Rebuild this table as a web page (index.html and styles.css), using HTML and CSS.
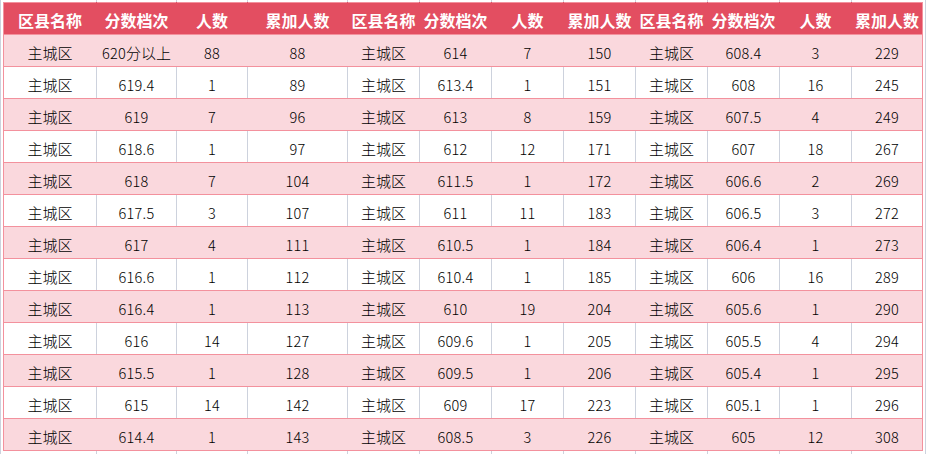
FILE: index.html
```html
<!DOCTYPE html>
<html lang="zh">
<head>
<meta charset="utf-8">
<title>分数档次</title>
<link rel="stylesheet" href="styles.css">
</head>
<body>
<div class="sheet">
<table class="grid">
<colgroup>
<col class="w93"><col class="w80"><col class="w71"><col class="w100">
<col class="w72"><col class="w72"><col class="w72"><col class="w72">
<col class="w72"><col class="w72"><col class="w72"><col class="w71">
</colgroup>
<thead>
<tr class="head">
<th>区县名称</th><th>分数档次</th><th>人数</th><th>累加人数</th>
<th>区县名称</th><th>分数档次</th><th>人数</th><th>累加人数</th>
<th>区县名称</th><th>分数档次</th><th>人数</th><th>累加人数</th>
</tr>
</thead>
<tbody>
<tr class="pink"><td class="c">主城区</td><td>620<span class="c">分以上</span></td><td>88</td><td>88</td><td class="c">主城区</td><td>614</td><td>7</td><td>150</td><td class="c">主城区</td><td>608.4</td><td>3</td><td>229</td></tr>
<tr class="white"><td class="c">主城区</td><td>619.4</td><td>1</td><td>89</td><td class="c">主城区</td><td>613.4</td><td>1</td><td>151</td><td class="c">主城区</td><td>608</td><td>16</td><td>245</td></tr>
<tr class="pink"><td class="c">主城区</td><td>619</td><td>7</td><td>96</td><td class="c">主城区</td><td>613</td><td>8</td><td>159</td><td class="c">主城区</td><td>607.5</td><td>4</td><td>249</td></tr>
<tr class="white"><td class="c">主城区</td><td>618.6</td><td>1</td><td>97</td><td class="c">主城区</td><td>612</td><td>12</td><td>171</td><td class="c">主城区</td><td>607</td><td>18</td><td>267</td></tr>
<tr class="pink"><td class="c">主城区</td><td>618</td><td>7</td><td>104</td><td class="c">主城区</td><td>611.5</td><td>1</td><td>172</td><td class="c">主城区</td><td>606.6</td><td>2</td><td>269</td></tr>
<tr class="white"><td class="c">主城区</td><td>617.5</td><td>3</td><td>107</td><td class="c">主城区</td><td>611</td><td>11</td><td>183</td><td class="c">主城区</td><td>606.5</td><td>3</td><td>272</td></tr>
<tr class="pink"><td class="c">主城区</td><td>617</td><td>4</td><td>111</td><td class="c">主城区</td><td>610.5</td><td>1</td><td>184</td><td class="c">主城区</td><td>606.4</td><td>1</td><td>273</td></tr>
<tr class="white"><td class="c">主城区</td><td>616.6</td><td>1</td><td>112</td><td class="c">主城区</td><td>610.4</td><td>1</td><td>185</td><td class="c">主城区</td><td>606</td><td>16</td><td>289</td></tr>
<tr class="pink"><td class="c">主城区</td><td>616.4</td><td>1</td><td>113</td><td class="c">主城区</td><td>610</td><td>19</td><td>204</td><td class="c">主城区</td><td>605.6</td><td>1</td><td>290</td></tr>
<tr class="white"><td class="c">主城区</td><td>616</td><td>14</td><td>127</td><td class="c">主城区</td><td>609.6</td><td>1</td><td>205</td><td class="c">主城区</td><td>605.5</td><td>4</td><td>294</td></tr>
<tr class="pink"><td class="c">主城区</td><td>615.5</td><td>1</td><td>128</td><td class="c">主城区</td><td>609.5</td><td>1</td><td>206</td><td class="c">主城区</td><td>605.4</td><td>1</td><td>295</td></tr>
<tr class="white"><td class="c">主城区</td><td>615</td><td>14</td><td>142</td><td class="c">主城区</td><td>609</td><td>17</td><td>223</td><td class="c">主城区</td><td>605.1</td><td>1</td><td>296</td></tr>
<tr class="pink"><td class="c">主城区</td><td>614.4</td><td>1</td><td>143</td><td class="c">主城区</td><td>608.5</td><td>3</td><td>226</td><td class="c">主城区</td><td>605</td><td>12</td><td>308</td></tr>
</tbody>
</table>
</div>
</body>
</html>
```

FILE: styles.css
```css
html, body {
  margin: 0;
  padding: 0;
  background: #ffffff;
}

.sheet {
  width: 927px;
  height: 454px;
  box-sizing: border-box;
  padding: 2px 0 0 3px;
  overflow: hidden;
  background-color: #ffffff;
  background-image:
    linear-gradient(#cdd2dd, #cdd2dd), linear-gradient(#cdd2dd, #cdd2dd),
    linear-gradient(#cdd2dd, #cdd2dd), linear-gradient(#cdd2dd, #cdd2dd),
    linear-gradient(#cdd2dd, #cdd2dd), linear-gradient(#cdd2dd, #cdd2dd),
    linear-gradient(#cdd2dd, #cdd2dd), linear-gradient(#cdd2dd, #cdd2dd),
    linear-gradient(#cdd2dd, #cdd2dd), linear-gradient(#cdd2dd, #cdd2dd),
    linear-gradient(#cdd2dd, #cdd2dd), linear-gradient(#cdd2dd, #cdd2dd),
    linear-gradient(#cdd2dd, #cdd2dd);
  background-repeat: no-repeat;
  background-size: 1px 100%;
  background-position: 0 0, 96px 0, 176px 0, 247px 0, 347px 0, 419px 0,
    491px 0, 563px 0, 635px 0, 707px 0, 779px 0, 851px 0, 925px 0;
}

.grid {
  border-collapse: collapse;
  table-layout: fixed;
  width: 920px;
}

.w93 { width: 93px; }
.w80 { width: 80px; }
.w71 { width: 71px; }
.w100 { width: 100px; }
.w72 { width: 72px; }

.grid tr {
  height: 32px;
}

.grid th,
.grid td {
  padding: 0;
  text-align: center;
  vertical-align: middle;
  border-top: 1px solid #f3919d;
  border-bottom: 1px solid #f3919d;
  white-space: nowrap;
}

.head th {
  background: #e34e61;
  color: #ffffff;
  font-family: "Noto Sans CJK SC", "Noto Sans", sans-serif;
  font-weight: 700;
  font-size: 16px;
  line-height: 18px;
  padding-top: 2px;
  border-left: 1px solid #e34e61;
  border-right: 1px solid #e34e61;
}

.grid td {
  color: #000000;
  font-family: "Noto Sans CJK SC", "Noto Sans", sans-serif;
  font-weight: 300;
  font-size: 14.5px;
  letter-spacing: 0.3px;
  line-height: 18px;
  padding-top: 4px;
}

.grid td .c,
.grid td.c {
  font-size: 15px;
  letter-spacing: 0;
}

.pink td {
  background: #fad8dd;
  border-left: 1px solid #fad8dd;
  border-right: 1px solid #fad8dd;
}

.white td {
  background: #ffffff;
  border-left: 1px solid #cdd2dd;
  border-right: 1px solid #cdd2dd;
}

.grid tr > :first-child {
  border-left: 1px solid #f3919d;
}

.grid tr > :last-child {
  border-right: 1px solid #f3919d;
}
```
